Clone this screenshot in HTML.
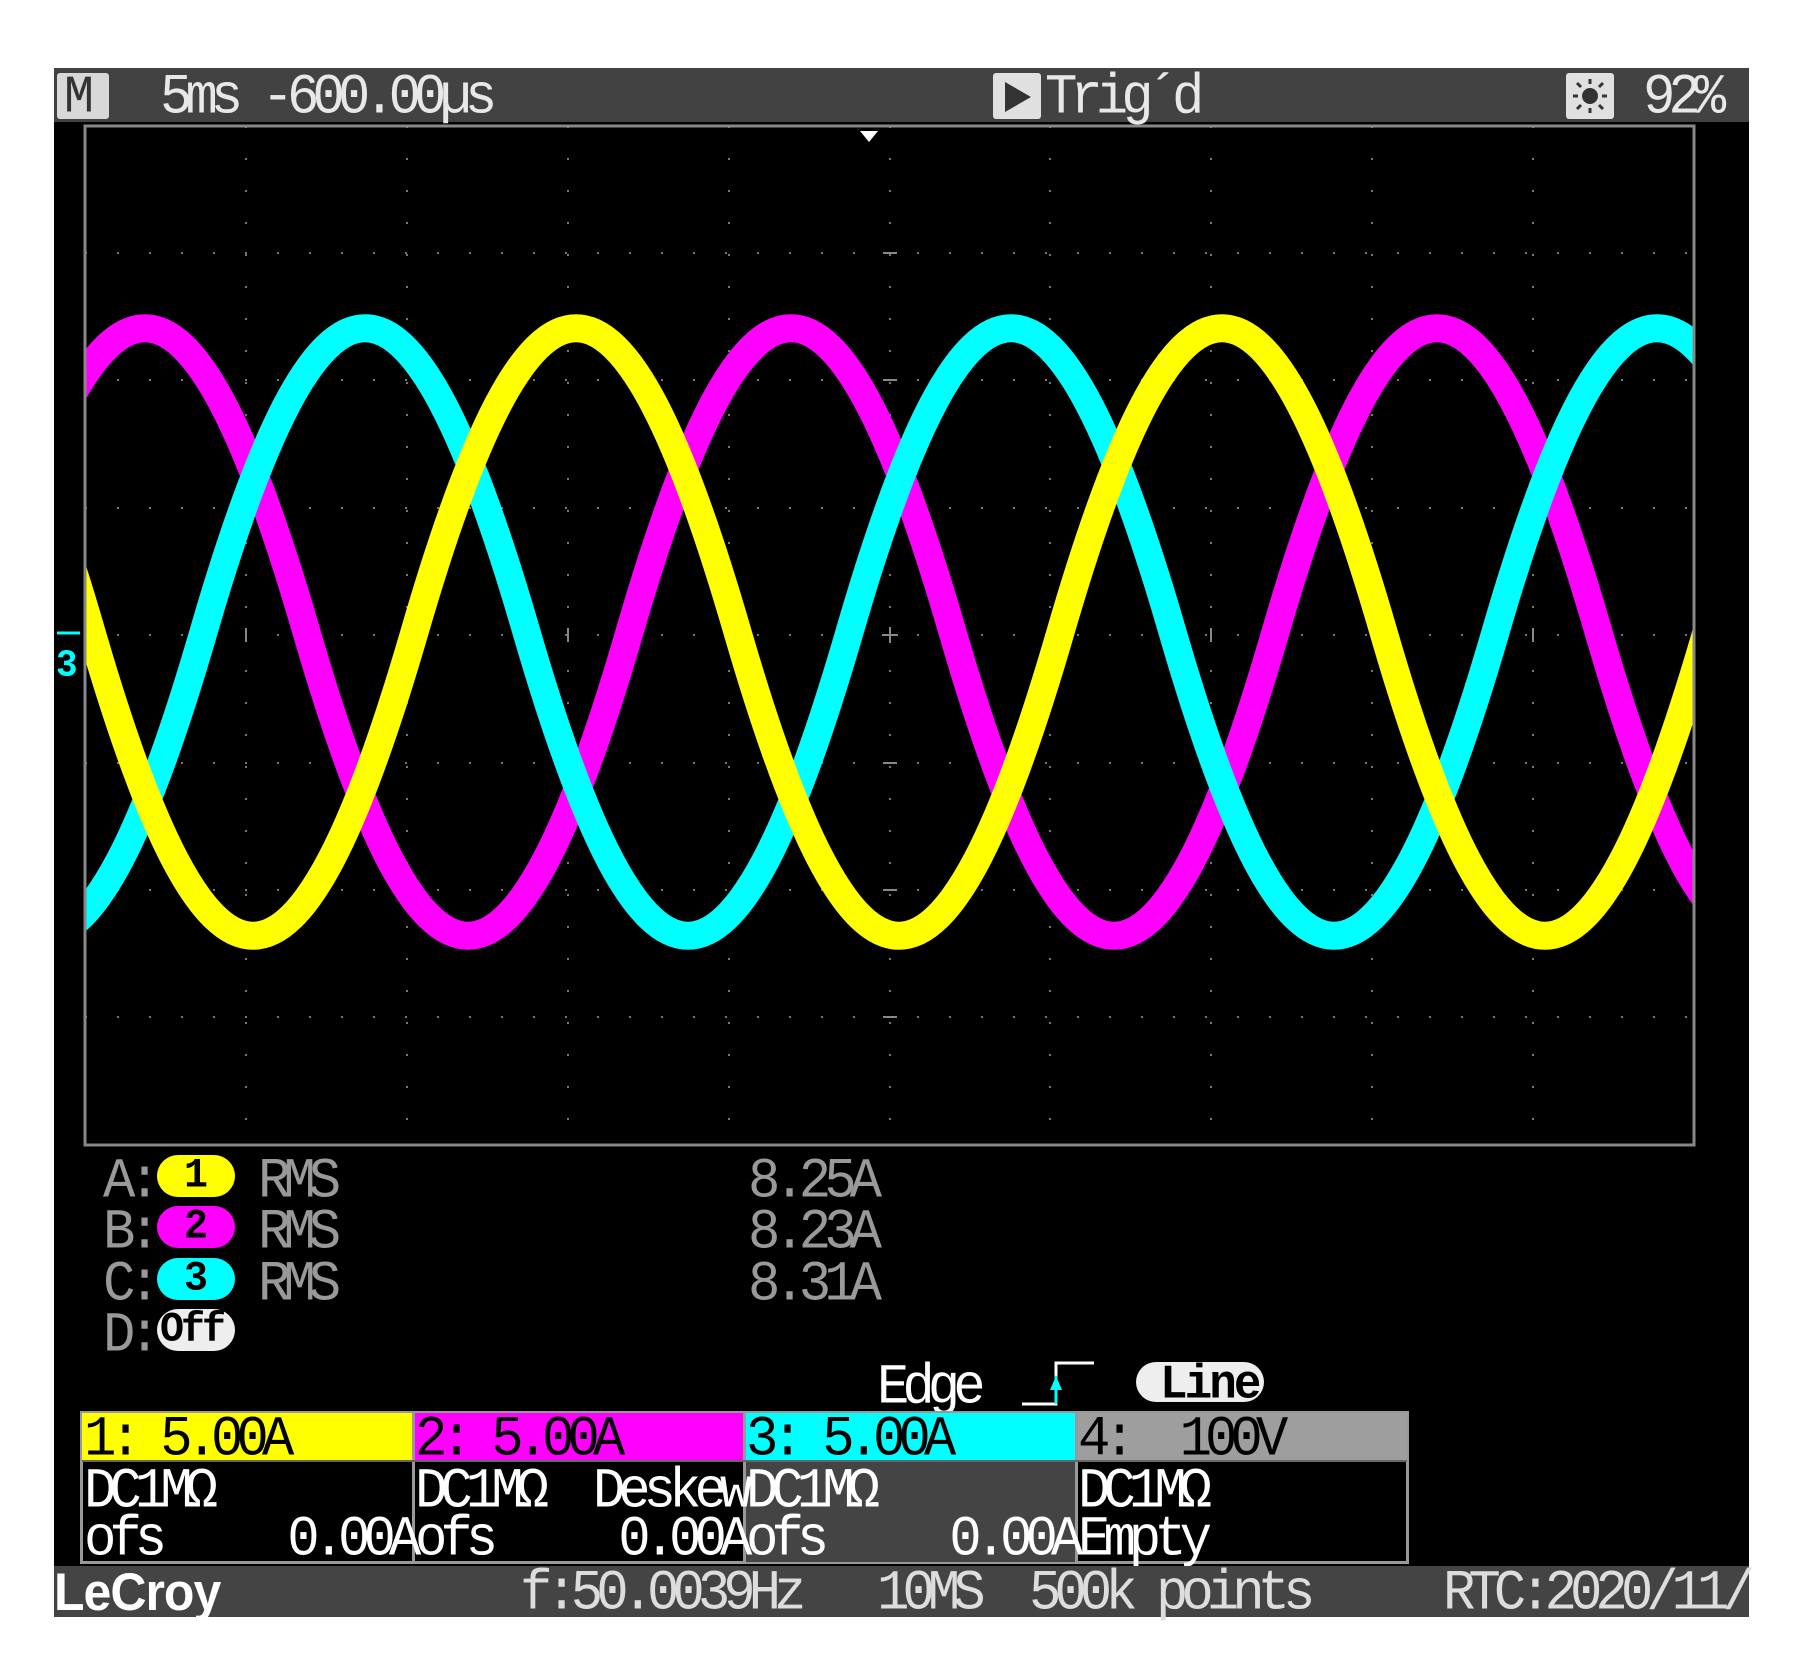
<!DOCTYPE html>
<html><head><meta charset="utf-8">
<style>
*{margin:0;padding:0;box-sizing:border-box}
body{width:1799px;height:1676px;background:#fff;position:relative;overflow:hidden;font-family:"Liberation Mono",monospace}
.t{position:absolute;white-space:pre;font-size:54px;letter-spacing:-7px;line-height:1;transform:scaleY(1.05)}
.abs{position:absolute}
.b{font-weight:bold;font-size:40px;letter-spacing:0;color:#000}
</style></head><body>
<div class="abs" style="left:54px;top:68px;width:1695px;height:1549px;background:#000"></div>
<!-- top bar -->
<div class="abs" style="left:54px;top:68px;width:1695px;height:54px;background:#424242"></div>
<div class="abs" style="left:57px;top:73px;width:52px;height:46px;background:#d8d8d8;border-radius:3px"></div>
<div class="t" style="left:64px;top:74px;color:#333;font-size:50px">M</div>
<div class="t" style="left:160px;top:72px;color:#e8e8e8">5ms -600.00µs</div>
<div class="abs" style="left:993px;top:73px;width:48px;height:46px;background:#e0e0e0;border-radius:3px"></div>
<svg class="abs" style="left:1003px;top:80px" width="30" height="34"><polygon points="2,2 28,17 2,32" fill="#333"/></svg>
<div class="t" style="left:1045px;top:72px;color:#e8e8e8">Trig´d</div>
<div class="abs" style="left:1566px;top:73px;width:48px;height:46px;background:#e0e0e0;border-radius:3px"></div>
<svg class="abs" style="left:1571px;top:78px" width="38" height="36"><circle cx="19" cy="18" r="8" fill="#333"/><g stroke="#333" stroke-width="3"><line x1="19" y1="1" x2="19" y2="6"/><line x1="19" y1="30" x2="19" y2="35"/><line x1="2" y1="18" x2="7" y2="18"/><line x1="31" y1="18" x2="36" y2="18"/><line x1="6" y1="5" x2="10" y2="9"/><line x1="28" y1="27" x2="32" y2="31"/><line x1="32" y1="5" x2="28" y2="9"/><line x1="6" y1="31" x2="10" y2="27"/></g></svg>
<div class="t" style="left:1643px;top:72px;color:#e8e8e8">92%</div>

<!-- grid + waves -->
<svg class="abs" style="left:0;top:0" width="1799" height="1676">
<defs><clipPath id="g"><rect x="86" y="127" width="1607" height="1017"/></clipPath></defs>
<g stroke="#777" stroke-width="2" stroke-dasharray="2 30" fill="none">
<line x1="85" y1="253" x2="1694" y2="253"/><line x1="85" y1="380" x2="1694" y2="380"/><line x1="85" y1="508" x2="1694" y2="508"/><line x1="85" y1="635" x2="1694" y2="635"/><line x1="85" y1="763" x2="1694" y2="763"/><line x1="85" y1="890" x2="1694" y2="890"/><line x1="85" y1="1017" x2="1694" y2="1017"/>
<line x1="246" y1="126" x2="246" y2="1145"/><line x1="407" y1="126" x2="407" y2="1145"/><line x1="568" y1="126" x2="568" y2="1145"/><line x1="729" y1="126" x2="729" y2="1145"/><line x1="890" y1="126" x2="890" y2="1145"/><line x1="1050" y1="126" x2="1050" y2="1145"/><line x1="1211" y1="126" x2="1211" y2="1145"/><line x1="1372" y1="126" x2="1372" y2="1145"/><line x1="1533" y1="126" x2="1533" y2="1145"/>
</g>
<g stroke="#888" stroke-width="2">
<line x1="882" y1="635" x2="898" y2="635"/><line x1="890" y1="627" x2="890" y2="643"/>
<line x1="883" y1="253" x2="897" y2="253"/><line x1="883" y1="380" x2="897" y2="380"/><line x1="883" y1="508" x2="897" y2="508"/><line x1="883" y1="763" x2="897" y2="763"/><line x1="883" y1="890" x2="897" y2="890"/><line x1="883" y1="1017" x2="897" y2="1017"/>
<line x1="246" y1="628" x2="246" y2="642"/><line x1="568" y1="628" x2="568" y2="642"/><line x1="1211" y1="628" x2="1211" y2="642"/><line x1="1533" y1="628" x2="1533" y2="642"/>
</g>
<g clip-path="url(#g)" fill="none" stroke-width="28" stroke-linejoin="round">
<path stroke="#ff00ff" d="M-16.5 632 C101.1 227 188.9 227 306.5 632 S511.9 1037 629.5 632 S835 227 952.5 632 S1158 1037 1275.5 632 S1481 227 1598.5 632 S1804 1037 1921.5 632"/>
<path stroke="#00ffff" d="M-442.5 632 C-324.9 227 -237.1 227 -119.5 632 S85.9 1037 203.5 632 S409 227 526.5 632 S732 1037 849.5 632 S1055 227 1172.5 632 S1378 1037 1495.5 632 S1701 227 1818.5 632"/>
<path stroke="#ffff00" d="M-231.5 632 C-113.9 227 -26.1 227 91.5 632 S296.9 1037 414.5 632 S620 227 737.5 632 S943 1037 1060.5 632 S1266 227 1383.5 632 S1589 1037 1706.5 632 S1912 227 2029.5 632"/>
</g>
<rect x="85" y="126" width="1609" height="1019" fill="none" stroke="#888" stroke-width="3"/>
<polygon points="860,131 878,131 869,142" fill="#fff"/>
<line x1="57" y1="633" x2="80" y2="633" stroke="#0ff" stroke-width="3"/>
</svg>
<div class="t" style="left:56px;top:648px;color:#0ff;font-size:36px;letter-spacing:0;font-weight:bold">3</div>

<!-- measurements -->
<div class="t" style="left:103px;top:1156px;color:#999">A:</div>
<div class="abs" style="left:157px;top:1155px;width:78px;height:42px;background:#ff0;border-radius:21px"></div>
<div class="t b" style="left:184px;top:1157px">1</div>
<div class="t" style="left:258px;top:1156px;color:#999">RMS</div>
<div class="t" style="left:748px;top:1156px;color:#999">8.25A</div>

<div class="t" style="left:103px;top:1207px;color:#999">B:</div>
<div class="abs" style="left:157px;top:1206px;width:78px;height:42px;background:#f0f;border-radius:21px"></div>
<div class="t b" style="left:184px;top:1208px">2</div>
<div class="t" style="left:258px;top:1207px;color:#999">RMS</div>
<div class="t" style="left:748px;top:1207px;color:#999">8.23A</div>

<div class="t" style="left:103px;top:1259px;color:#999">C:</div>
<div class="abs" style="left:157px;top:1258px;width:78px;height:42px;background:#0ff;border-radius:21px"></div>
<div class="t b" style="left:184px;top:1260px">3</div>
<div class="t" style="left:258px;top:1259px;color:#999">RMS</div>
<div class="t" style="left:748px;top:1259px;color:#999">8.31A</div>

<div class="t" style="left:103px;top:1310px;color:#999">D:</div>
<div class="abs" style="left:157px;top:1309px;width:78px;height:42px;background:#eee;border-radius:21px"></div>
<div class="t b" style="left:160px;top:1311px;letter-spacing:-3px">Off</div>

<!-- trigger -->
<div class="t" style="left:877px;top:1362px;color:#fff">Edge</div>
<svg class="abs" style="left:1020px;top:1360px" width="76" height="46"><polyline points="2,44 36,44 36,3 74,3" fill="none" stroke="#fff" stroke-width="3"/><polygon points="30,30 42,30 36,16" fill="#0ff"/><line x1="36" y1="16" x2="36" y2="44" stroke="#0ff" stroke-width="3"/></svg>
<div class="abs" style="left:1136px;top:1362px;width:128px;height:40px;background:#eee;border-radius:20px"></div>
<div class="t" style="left:1160px;top:1362px;color:#000;font-size:46px;letter-spacing:-3px;font-weight:bold">Line</div>

<!-- channel boxes -->
<div class="abs" style="left:80px;top:1411px;width:1329px;height:153px;border:3px solid #999;background:#000"></div>
<div class="abs" style="left:82px;top:1413px;width:331px;height:48px;background:#ff0"></div>
<div class="abs" style="left:413px;top:1413px;width:331px;height:48px;background:#f0f"></div>
<div class="abs" style="left:744px;top:1413px;width:332px;height:48px;background:#0ff"></div>
<div class="abs" style="left:1076px;top:1413px;width:331px;height:48px;background:#9e9e9e"></div>
<div class="abs" style="left:744px;top:1461px;width:332px;height:101px;background:#444"></div>
<div class="abs" style="left:412px;top:1413px;width:3px;height:149px;background:#999"></div>
<div class="abs" style="left:743px;top:1413px;width:3px;height:149px;background:#999"></div>
<div class="abs" style="left:1075px;top:1413px;width:3px;height:149px;background:#999"></div>
<div class="abs" style="left:82px;top:1460px;width:1325px;height:2px;background:#666"></div>

<div class="t" style="left:84px;top:1414px;color:#000">1: 5.00A</div>
<div class="t" style="left:415px;top:1414px;color:#000">2: 5.00A</div>
<div class="t" style="left:746px;top:1414px;color:#000">3: 5.00A</div>
<div class="t" style="left:1078px;top:1414px;color:#000">4:  100V</div>
<div class="t" style="left:84px;top:1466px;color:#fff">DC1MΩ</div>
<div class="t" style="left:415px;top:1466px;color:#fff">DC1MΩ  Deskew</div>
<div class="t" style="left:746px;top:1466px;color:#fff">DC1MΩ</div>
<div class="t" style="left:1078px;top:1466px;color:#fff">DC1MΩ</div>
<div class="t" style="left:84px;top:1514px;color:#fff">ofs     0.00A</div>
<div class="t" style="left:415px;top:1514px;color:#fff">ofs     0.00A</div>
<div class="t" style="left:746px;top:1514px;color:#fff">ofs     0.00A</div>
<div class="t" style="left:1078px;top:1514px;color:#fff">Empty</div>

<!-- bottom bar -->
<div class="abs" style="left:54px;top:1566px;width:1695px;height:51px;background:#444"></div>
<div class="t" style="left:54px;top:1567px;color:#fff;font-family:'Liberation Sans',sans-serif;font-size:50px;letter-spacing:-1px;font-weight:bold">LeCroy</div>
<div class="t" style="left:520px;top:1568px;color:#ddd">f:50.0039Hz</div>
<div class="t" style="left:877px;top:1568px;color:#ddd">10MS</div>
<div class="t" style="left:1029px;top:1568px;color:#ddd">500k points</div>
<div class="t" style="left:1443px;top:1568px;color:#ddd">RTC:2020/11/</div>
</body></html>
